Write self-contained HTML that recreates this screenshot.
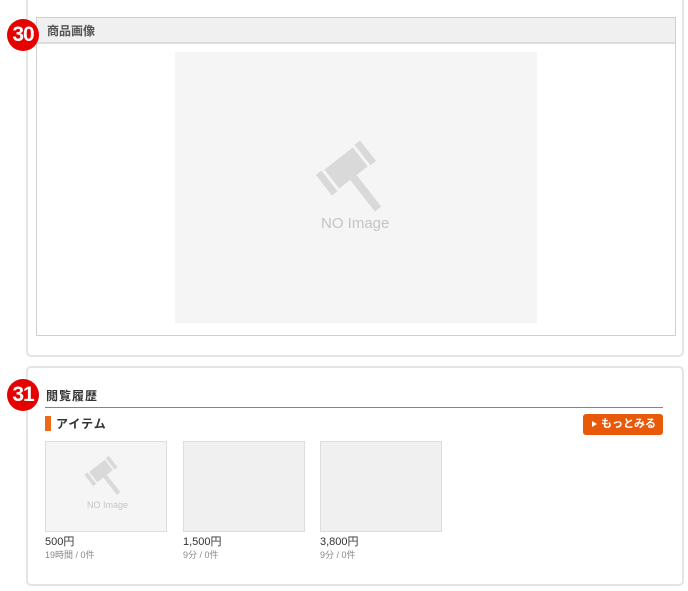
<!DOCTYPE html><html><head><meta charset="utf-8"><style>
body{margin:0;width:688px;height:591px;background:#fff;position:relative;overflow:hidden;font-family:"Liberation Sans","Noto Sans CJK JP",sans-serif}
.a{position:absolute;box-sizing:border-box}
.badge{position:absolute;width:32px;height:32px;border-radius:50%;background:#e60000;color:#fff;font-weight:bold;font-size:21px;line-height:32px;text-align:center;letter-spacing:-1px}
.th{position:absolute;top:441px;width:122px;height:91px;background:#f0f0f0;border:1px solid #ddd;box-sizing:border-box}
.p{position:absolute;top:533px;font-size:11px;color:#333}
.s{position:absolute;top:548px;font-size:9px;color:#888}
</style></head><body>
<svg width="0" height="0" style="position:absolute"><defs><g id="gv" fill="#d9d9d9"><rect x="-18" y="-12" width="36" height="24"/><rect x="-28" y="-13" width="7" height="26"/><rect x="21" y="-13" width="7" height="26"/><rect x="-4" y="12" width="8" height="40"/></g></defs></svg>
<div class="a" style="left:26px;top:-10px;width:658px;height:367px;border:2px solid #e4e4e4;border-radius:5px"></div>
<div class="a" style="left:36px;top:17px;width:640px;height:319px;border:1px solid #d0d0d0"></div>
<div class="a" style="left:37px;top:18px;width:638px;height:26px;background:#f0f0f0;border-bottom:2px solid #dcdcdc"></div>
<div class="a" style="left:47px;top:22px;font-size:12px;color:#555;font-weight:bold">商品画像</div>
<div class="a" style="left:175px;top:52px;width:362px;height:271px;background:#f5f5f5"></div>
<svg class="a" style="left:0;top:0" width="688" height="591"><use href="#gv" transform="translate(346,168) rotate(-38)"/></svg>
<div class="a" style="left:321px;top:215px;font-size:15px;color:#c4c4c4">NO Image</div>
<div class="badge" style="left:7px;top:19px">30</div>

<div class="a" style="left:26px;top:366px;width:658px;height:220px;border:2px solid #e4e4e4;border-radius:5px"></div>
<div class="badge" style="left:7px;top:379px">31</div>
<div class="a" style="left:46px;top:387px;font-size:12px;font-weight:bold;color:#333;letter-spacing:1px">閲覧履歴</div>
<div class="a" style="left:45px;top:407px;width:618px;height:1px;background:#d8683a"></div>
<div class="a" style="left:45px;top:416px;width:6px;height:15px;background:#ee6a1a"></div>
<div class="a" style="left:56px;top:415px;font-size:12px;font-weight:bold;color:#333;letter-spacing:1px">アイテム</div>
<div class="a" style="left:583px;top:414px;width:80px;height:21px;background:#e85a0a;border-radius:3px;color:#fff;font-size:11px;font-weight:bold;line-height:21px;padding-left:18px">もっとみる<span style="position:absolute;left:9px;top:7px;border-left:5px solid #fff;border-top:3.5px solid transparent;border-bottom:3.5px solid transparent"></span></div>
<div class="th" style="left:45px;background:#f5f5f5"></div>
<svg class="a" style="left:45px;top:441px" width="122" height="91"><use href="#gv" transform="translate(56,30) rotate(-38) scale(0.55)"/></svg>
<div class="a" style="left:87px;top:500px;font-size:9px;color:#c4c4c4">NO Image</div>
<div class="th" style="left:183px"></div>
<div class="th" style="left:320px"></div>
<div class="p" style="left:45px">500円</div><div class="s" style="left:45px">19時間 / 0件</div>
<div class="p" style="left:183px">1,500円</div><div class="s" style="left:183px">9分 / 0件</div>
<div class="p" style="left:320px">3,800円</div><div class="s" style="left:320px">9分 / 0件</div>
</body></html>
